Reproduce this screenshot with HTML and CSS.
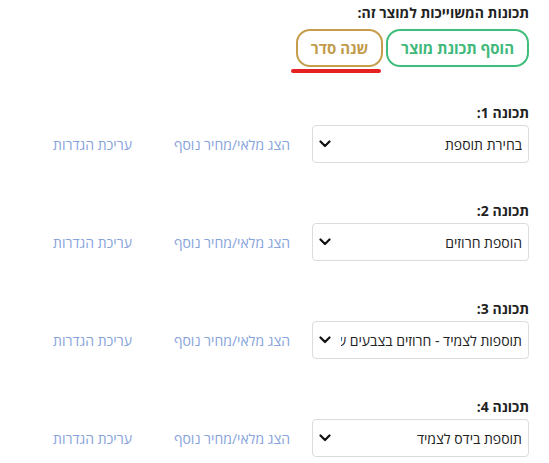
FILE: index.html
```
<!DOCTYPE html>
<html lang="he" dir="rtl">
<head>
    <meta charset="UTF-8">
    <title>תכונות מוצר</title>
    <link rel="stylesheet" href="styles.css">
</head>
<body>

<div class="features">
    <div class="featuresHead">
        <div class="featuresTitle">תכונות המשוייכות למוצר זה:</div>
        <div class="featuresActions">
            <a href="javascript:;" class="btn btnGreen">הוסף תכונת מוצר</a>
            <div class="sortWrap">
                <a href="javascript:;" class="btn btnGold">שנה סדר</a>
                <div class="sortMark"></div>
            </div>
        </div>
    </div>

    <div class="featureItem">
        <div class="featureLabel">תכונה 1:</div>
        <div class="featureRow">
            <div class="selectWrap">
                <select class="featureSelect"><option>בחירת תוספת</option></select>
                <svg class="selectArrow" width="12" height="8" viewBox="0 0 12 8"><path d="M1.5 1.5 L6 6 L10.5 1.5" fill="none" stroke="#111" stroke-width="2.2" stroke-linecap="round" stroke-linejoin="round"/></svg>
            </div>
            <a href="javascript:;" class="featureLink">הצג מלאי/מחיר נוסף</a>
            <a href="javascript:;" class="featureLink">עריכת הגדרות</a>
        </div>
    </div>

    <div class="featureItem">
        <div class="featureLabel">תכונה 2:</div>
        <div class="featureRow">
            <div class="selectWrap">
                <select class="featureSelect"><option>הוספת חרוזים</option></select>
                <svg class="selectArrow" width="12" height="8" viewBox="0 0 12 8"><path d="M1.5 1.5 L6 6 L10.5 1.5" fill="none" stroke="#111" stroke-width="2.2" stroke-linecap="round" stroke-linejoin="round"/></svg>
            </div>
            <a href="javascript:;" class="featureLink">הצג מלאי/מחיר נוסף</a>
            <a href="javascript:;" class="featureLink">עריכת הגדרות</a>
        </div>
    </div>

    <div class="featureItem">
        <div class="featureLabel">תכונה 3:</div>
        <div class="featureRow">
            <div class="selectWrap">
                <select class="featureSelect"><option>תוספות לצמיד - חרוזים בצבעים שונים</option></select>
                <svg class="selectArrow" width="12" height="8" viewBox="0 0 12 8"><path d="M1.5 1.5 L6 6 L10.5 1.5" fill="none" stroke="#111" stroke-width="2.2" stroke-linecap="round" stroke-linejoin="round"/></svg>
            </div>
            <a href="javascript:;" class="featureLink">הצג מלאי/מחיר נוסף</a>
            <a href="javascript:;" class="featureLink">עריכת הגדרות</a>
        </div>
    </div>

    <div class="featureItem">
        <div class="featureLabel">תכונה 4:</div>
        <div class="featureRow">
            <div class="selectWrap">
                <select class="featureSelect"><option>תוספת בידס לצמיד</option></select>
                <svg class="selectArrow" width="12" height="8" viewBox="0 0 12 8"><path d="M1.5 1.5 L6 6 L10.5 1.5" fill="none" stroke="#111" stroke-width="2.2" stroke-linecap="round" stroke-linejoin="round"/></svg>
            </div>
            <a href="javascript:;" class="featureLink">הצג מלאי/מחיר נוסף</a>
            <a href="javascript:;" class="featureLink">עריכת הגדרות</a>
        </div>
    </div>
</div>

</body>
</html>
```

FILE: styles.css
```
body {
    margin: 0;
    background: #fff;
    font-family: "Open Sans", "DejaVu Sans", sans-serif;
    color: #222;
}
.features {
    padding: 3px 20px 0 20px;
}
.featuresTitle {
    font-size: 14px;
    font-weight: bold;
    line-height: 20px;
    color: #222;
}
.featuresActions {
    display: flex;
    gap: 3px;
    margin-top: 6px;
}
.btn {
    display: flex;
    align-items: center;
    justify-content: center;
    height: 38px;
    box-sizing: border-box;
    border: 2px solid;
    border-radius: 14px;
    font-size: 15px;
    font-weight: bold;
    text-decoration: none;
}
.btnGreen {
    width: 143px;
    color: #3fb87a;
    border-color: #3fbd7c;
}
.btnGold {
    width: 87px;
    color: #c29b4c;
    border-color: #c59d4c;
}
.sortWrap {
    display: flex;
    flex-direction: column;
}
.sortMark {
    align-self: flex-end;
    width: 90px;
    height: 4px;
    margin: 2px 2px 0 0;
    background: #e52222;
    border-radius: 2px;
}
.featureItem {
    margin-top: 30px;
}
.featureItem + .featureItem {
    margin-top: 38px;
}
.featureLabel {
    font-size: 14px;
    font-weight: bold;
    line-height: 20px;
    margin-bottom: 2px;
}
.featureRow {
    display: flex;
    align-items: center;
}
.selectWrap {
    position: relative;
    width: 217px;
}
.featureSelect {
    -webkit-appearance: none;
    appearance: none;
    width: 100%;
    height: 38px;
    box-sizing: border-box;
    border: 1px solid #dcdcdc;
    border-radius: 4px;
    background: #fff;
    padding: 0 6px 0 28px;
    font-family: "Open Sans", "DejaVu Sans", sans-serif;
    font-size: 14px;
    color: #222;
    direction: rtl;
}
.selectArrow {
    position: absolute;
    left: 7px;
    top: 15px;
    pointer-events: none;
}
.featureLink {
    font-size: 14px;
    color: #87a3dc;
    text-decoration: none;
    margin-right: 22px;
}
.featureLink + .featureLink {
    margin-right: 42px;
}
```
